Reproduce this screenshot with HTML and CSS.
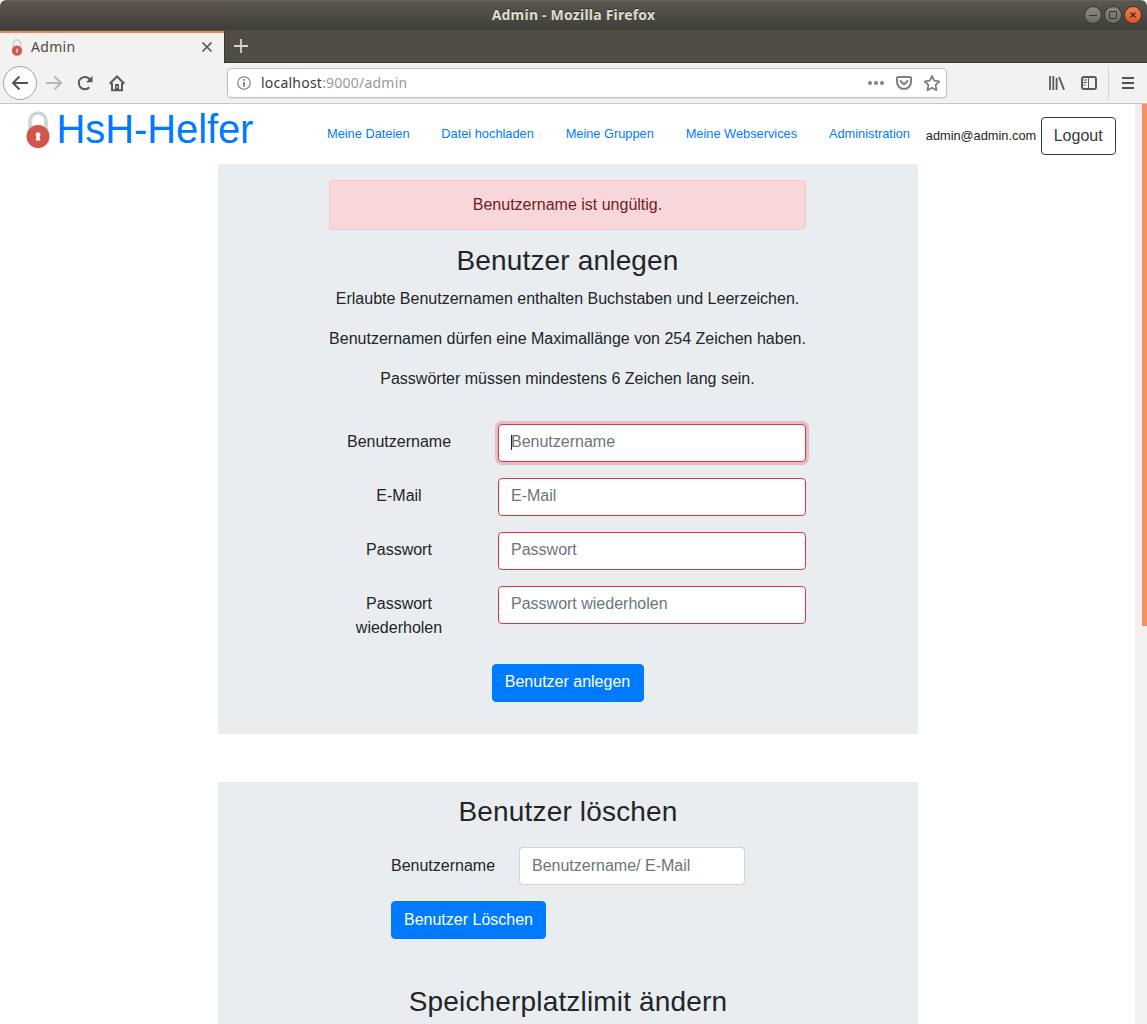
FILE: index.html
```
<!DOCTYPE html>
<html lang="de">
<head>
<meta charset="utf-8">
<title>Admin</title>
<link rel="stylesheet" href="styles.css">
</head>
<body>
<div class="window">
  <header class="titlebar">
    <span class="title">Admin - Mozilla Firefox</span>
    <svg class="controls" width="60" height="20" viewBox="0 0 60 20">
      <defs>
        <linearGradient id="grey" x1="0" y1="0" x2="0" y2="1"><stop offset="0" stop-color="#8b8981"/><stop offset="1" stop-color="#6c6a63"/></linearGradient>
        <linearGradient id="red" x1="0" y1="0" x2="0" y2="1"><stop offset="0" stop-color="#f5815b"/><stop offset="1" stop-color="#e2501f"/></linearGradient>
      </defs>
      <g stroke="#35342f">
        <circle cx="10" cy="10" r="8.5" fill="url(#grey)"/>
        <circle cx="30" cy="10" r="8.5" fill="url(#grey)"/>
        <circle cx="50" cy="10" r="8.5" fill="url(#red)"/>
        <path d="M6 10.500h8M26.500 6.500h7v7h-7z" fill="none"/>
        <path d="M47.500 7.500l5 5m0-5l-5 5" stroke-width="1.400"/>
      </g>
    </svg>
  </header>
  <div class="tabs">
    <div class="tab">
      <svg class="favicon" width="12" height="17" viewBox="0 0 24 38"><path d="M4 20V10a8 8 0 0 1 16 0v10" fill="none" stroke="#ced5d8" stroke-width="4"/><circle cx="12" cy="26" r="11.500" fill="#d45847"/><path d="M10.500 22h3v8h-3z" fill="#fff"/></svg>
      <span class="tab-name">Admin</span>
      <svg width="12" height="12" viewBox="0 0 12 12"><path d="M1.500 1.500l9 9m0-9l-9 9" stroke="#55534f" stroke-width="1.600"/></svg>
    </div>
    <div class="new-tab"><svg width="16" height="16" viewBox="0 0 16 16"><path d="M8 1v14M1 8h14" stroke="#d6d4cd" stroke-width="1.800"/></svg></div>
  </div>
  <div class="toolbar">
    <span class="back"><svg width="18" height="16" viewBox="0 0 18 16"><path d="M17 8H2M8.500 1.500L2 8l6.500 6.500" fill="none" stroke="#55534f" stroke-width="2"/></svg></span>
    <svg class="forward" width="18" height="16" viewBox="0 0 18 16"><path d="M1 8h15M9.500 1.500L16 8l-6.500 6.500" fill="none" stroke="#b9b7b4" stroke-width="2"/></svg>
    <svg class="reload" width="16" height="16" viewBox="0 0 16 16"><path d="M12.300 12.300A6.100 6.100 0 1 1 12.900 4.600" fill="none" stroke="#5c5a57" stroke-width="2"/><path d="M15.500.8v6.400H9z" fill="#5c5a57"/></svg>
    <svg class="home" width="16" height="17" viewBox="0 0 16 17"><path d="M.7 8.800L8 1.500l7.300 7.300" fill="none" stroke="#5c5a57" stroke-width="2"/><path d="M3 8v7.200h10V8" fill="none" stroke="#5c5a57" stroke-width="2"/><path d="M6 16V9h4v7z" fill="#5c5a57"/><path d="M8 11v2" stroke="#f3f2f1"/></svg>
    <div class="url">
      <svg width="14" height="14" viewBox="0 0 14 14"><circle cx="7" cy="7" r="6.300" fill="none" stroke="#777" stroke-width="1.100"/><path d="M7 6v4.700M7 3v1.700" stroke="#777" stroke-width="1.700"/></svg>
      <span class="address"><b>localhost</b>:9000/admin</span>
      <svg width="74" height="18" viewBox="0 0 74 18"><g fill="#838180"><circle cx="3" cy="9" r="2"/><circle cx="9" cy="9" r="2"/><circle cx="15" cy="9" r="2"/></g><g fill="none" stroke="#838180" stroke-width="2" stroke-linejoin="round"><path d="M31 3h12q1 0 1 1v4a7 7 0 0 1-14 0V4q0-1 1-1z"/><path d="M33.500 7l3.500 3.500L40.500 7" stroke-linecap="round"/><path d="M65 2l2.200 4.700 5.100.7-3.700 3.600.9 5.200-4.500-2.500-4.500 2.500.9-5.200-3.700-3.600 5.100-.7z" stroke-width="1.800"/></g></svg>
    </div>
    <svg class="library" width="16" height="16" viewBox="0 0 16 16"><path d="M1 1v14M4.300 1v14M7.600 3v12" stroke="#5c5a57" stroke-width="1.800"/><path d="M10 2l5 12.700" stroke="#5c5a57" stroke-width="1.900"/></svg>
    <svg class="sidebar" width="16" height="14" viewBox="0 0 16 14"><rect x="1" y="1" width="14" height="12" rx="2" fill="none" stroke="#5c5a57" stroke-width="2"/><path d="M7.500 1v12M2.500 4h3.500M2.500 6.500h3.500M2.500 9h2" stroke="#5c5a57"/></svg>
    <span class="divider"></span>
    <svg width="12" height="12" viewBox="0 0 12 12"><path d="M0 1h12M0 6h12M0 11h12" stroke="#55534f" stroke-width="2"/></svg>
  </div>
  <div class="viewport">
    <main class="page">
      <nav class="nav">
        <a class="brand">
          <svg width="24" height="38" viewBox="0 0 24 38"><path d="M4 20V10a8 8 0 0 1 16 0v10" fill="none" stroke="#ced5d8" stroke-width="3.600"/><circle cx="12" cy="25.500" r="11.500" fill="#d3554b"/><path d="M12 21.300a2.400 2.400 0 0 1 1.500 4.300l.9 4H9.600l.9-4a2.400 2.400 0 0 1 1.500-4.300z" fill="#fff"/></svg>
          <span>HsH-Helfer</span>
        </a>
        <div class="links"><a>Meine Dateien</a><a>Datei hochladen</a><a>Meine Gruppen</a><a>Meine Webservices</a><a>Administration</a></div>
        <span class="account">admin@admin.com</span>
        <button class="btn logout">Logout</button>
      </nav>
      <section class="card create">
        <div class="inner">
          <div class="alert">Benutzername ist ungültig.</div>
          <h2>Benutzer anlegen</h2>
          <p>Erlaubte Benutzernamen enthalten Buchstaben und Leerzeichen.</p>
          <p>Benutzernamen dürfen eine Maximallänge von 254 Zeichen haben.</p>
          <p>Passwörter müssen mindestens 6 Zeichen lang sein.</p>
          <form class="form">
            <div class="row"><label>Benutzername</label><div class="field invalid focused"><span class="caret"></span>Benutzername</div></div>
            <div class="row"><label>E-Mail</label><div class="field invalid">E-Mail</div></div>
            <div class="row"><label>Passwort</label><div class="field invalid">Passwort</div></div>
            <div class="row"><label>Passwort wiederholen</label><div class="field invalid">Passwort wiederholen</div></div>
            <button type="button" class="btn primary submit">Benutzer anlegen</button>
          </form>
        </div>
      </section>
      <section class="card manage">
        <h2>Benutzer löschen</h2>
        <form class="delete-form">
          <div class="delete-row"><label>Benutzername</label><div class="field">Benutzername/ E-Mail</div></div>
          <button type="button" class="btn primary">Benutzer Löschen</button>
        </form>
        <h2>Speicherplatzlimit ändern</h2>
      </section>
    </main>
    <div class="scrollbar"><div class="thumb"></div></div>
  </div>
</div>
</body>
</html>
```
FILE: styles.css
```
* { box-sizing: border-box; }
body { margin: 0; background: #fff; color: #212529; font: 16px/24px "Liberation Sans", Arial, sans-serif; }
svg { display: block; flex: none; }
.window { width: 1147px; height: 1024px; display: flex; flex-direction: column; overflow: hidden; border-radius: 6px 6px 0 0; }

.titlebar { height: 30px; flex: none; display: grid; grid-template-columns: 64px 1fr 64px; align-items: center; background: linear-gradient(#5b5850, #3e3d38); border-top: 1px solid #64625a; }
.title { grid-column: 2; padding-bottom: 2px; text-align: center; color: #dfdbd2; font: bold 14px/26px "Noto Sans", sans-serif; letter-spacing: 0.22px; text-shadow: 0 -1px #302f2b; }
.controls { margin-bottom: 1px; }
.tabs { height: 33px; flex: none; display: flex; background: #504d45; border-bottom: 1px solid #3b3934; }
.tab { width: 224px; height: 32px; margin-top: 1px; padding: 0 11px 2px; display: flex; align-items: center; background: #f3f2f1; border-top: 2px solid #f0845a; color: #4c4a47; font: 14px/20px "Noto Sans", sans-serif; }
.tab-name { flex: 1; padding: 0 0 1px 8px; letter-spacing: 0.3px; }
.new-tab { width: 34px; display: flex; align-items: center; padding-left: 8px; border-left: 1px solid #3b3934; }

.toolbar { height: 41px; flex: none; display: flex; align-items: center; padding: 0 13px 0 3px; background: #f3f2f1; border-bottom: 1px solid #c7c5c3; box-shadow: inset 224px 0 #f3f2f1; }
.back { width: 34px; height: 34px; flex: none; display: flex; align-items: center; justify-content: center; background: #fdfdfd; border: 1px solid #a8a6a4; border-radius: 50%; }
.forward { margin-left: 8px; }
.reload { margin-left: 14px; }
.home { margin-left: 16px; }
.url { width: 720px; height: 30px; margin-left: 102px; flex: none; display: flex; align-items: center; padding: 0 5px 0 9px; background: #fff; border: 1px solid #c2c0be; border-radius: 4px; box-shadow: 0 1px 2px #e0dedd; }
.address { flex: 1; padding-left: 10px; color: #9b9997; font: 14px/20px "Noto Sans", sans-serif; letter-spacing: 0.22px; }
.address b { color: #3c3b39; font-weight: 400; }
.library { margin-left: 102px; }
.sidebar { margin-left: 16px; }
.divider { width: 1px; height: 34px; margin: 0 13px 0 11px; background: #d4d2d0; }

.viewport { flex: 1; min-height: 0; display: flex; }
.page { width: 1135px; overflow: hidden; }
.scrollbar { width: 12px; padding-left: 7px; background: #f1f0ef; }
.thumb { height: 522px; background: #f48e69; }

.nav { height: 60px; display: flex; padding-left: 25.5px; }
.brand { width: 285.5px; display: flex; color: #007bff; font-size: 40px; line-height: 50px; letter-spacing: -0.1px; }
.brand svg { margin: 7px 7px 0 0; }
.links { display: flex; gap: 31.8px; margin-left: 16px; padding-top: 18px; color: #007bff; font-size: 12.8px; white-space: nowrap; }
.account { margin-left: 15.8px; padding-top: 20px; font-size: 12.8px; }
.btn { height: 38px; padding: 6px 12px 7px; border: 1px solid; border-radius: 4px; font: inherit; line-height: 23px; white-space: nowrap; }
.logout { margin: 13px 0 0 4.500px; background: #fff; border-color: #343a40; color: #343a40; }
.primary { background: #007bff; border-color: #007bff; color: #fff; }
.submit { width: 152px; padding: 5px 12px 8px; }

.card { width: 700px; margin-left: 218px; background: #e9edf0; text-align: center; }
.create { height: 570px; padding: 16px 112px 0 111px; }
.alert { height: 50px; padding: 12px 20px; background: #f8d7da; border: 1px solid #f5c6cb; border-radius: 4px; color: #721c24; margin-bottom: 14px; }
h2 { margin: 0 0 9px; font-size: 28px; font-weight: 400; line-height: 33.6px; letter-spacing: 0.17px; }
p { margin: 0 0 16px; white-space: nowrap; }
.form { padding-top: 17.4px; }
.row { display: grid; grid-template-columns: 140px 308px; column-gap: 29px; align-items: start; margin-bottom: 16px; }
.row label { padding: 6px 20px 8px; }
.row:first-child label { padding-inline: 0; }
.field { height: 38px; padding: 5px 12px 7px; background: #fff; border: 1px solid #ced4da; border-radius: 4px; color: #6c757d; text-align: left; }
.invalid { border-color: #dc3545; }
.focused { position: relative; box-shadow: 0 0 0 3px rgba(220, 53, 69, 0.25); }
.caret { position: absolute; left: 12px; top: 10px; width: 1px; height: 15px; background: #222; }
.manage { height: 242px; padding-top: 13px; margin-top: 48px; }
.delete-form { width: 354px; margin: 18.4px 0 46px 173px; text-align: left; }
.delete-row { display: grid; grid-template-columns: 128px 226px; margin-bottom: 16px; }
.delete-row label { padding-top: 7px; }
.delete-row .field { padding-top: 6px; }
```
